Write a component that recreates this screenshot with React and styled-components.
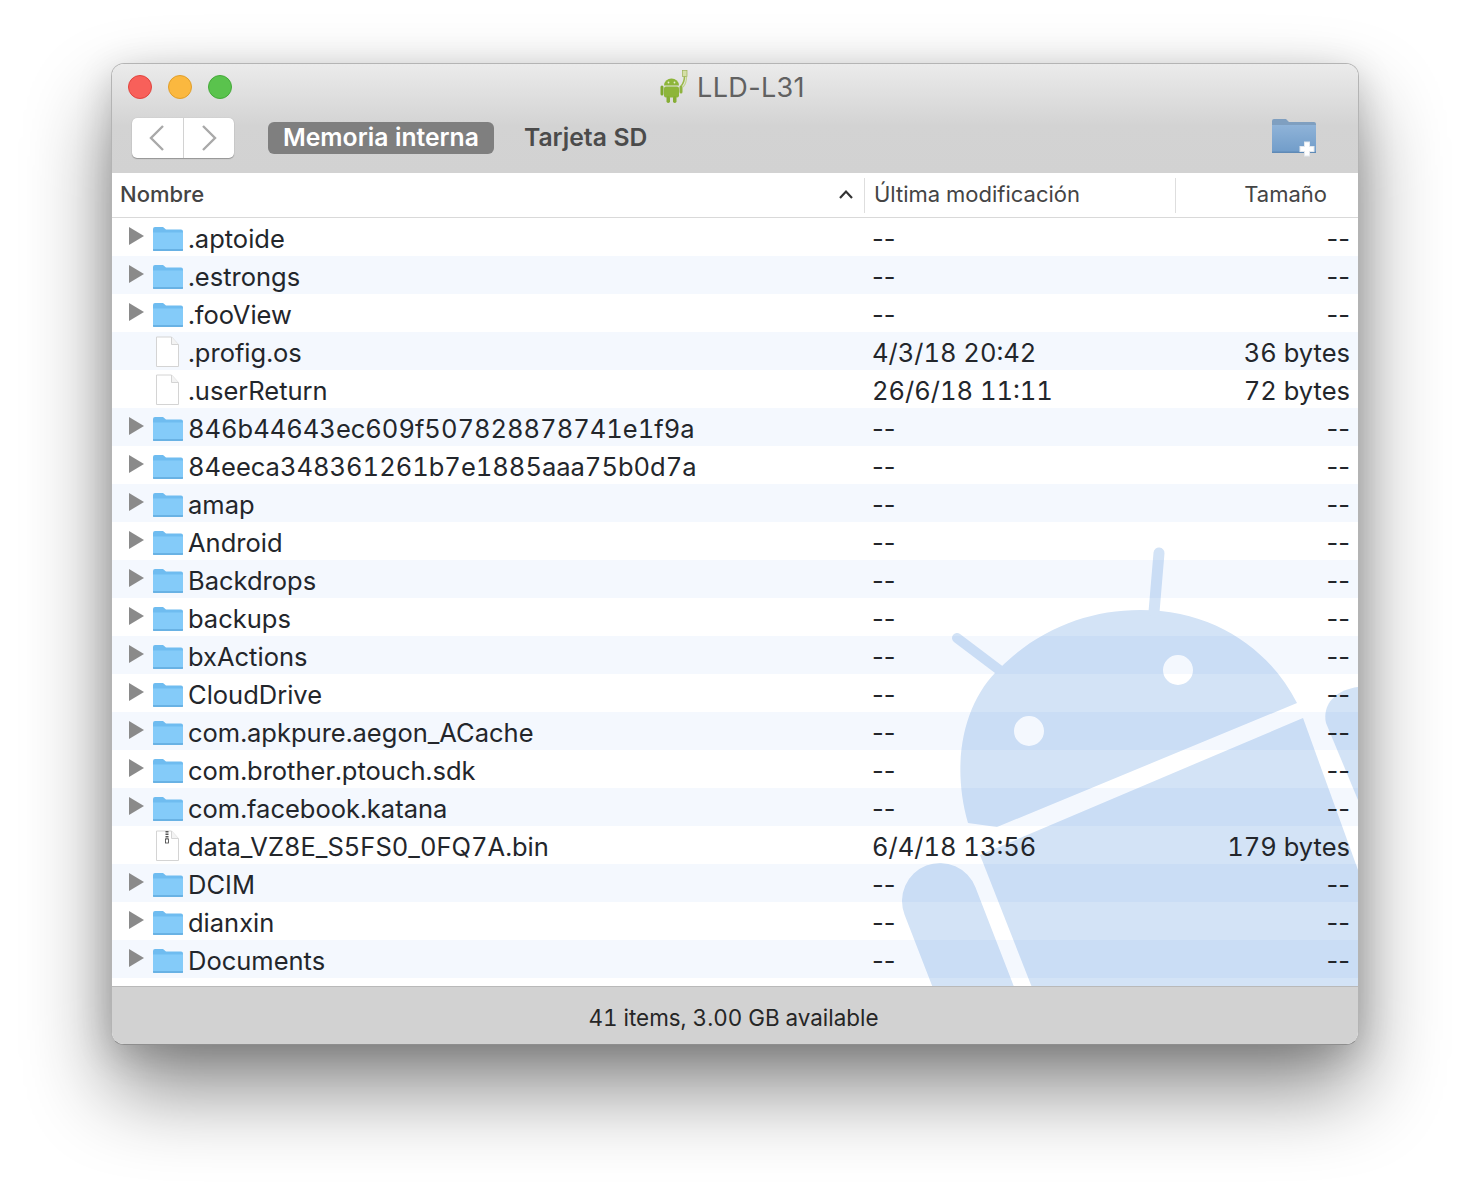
import React from 'react';
import styled, { createGlobalStyle } from 'styled-components';

const GlobalStyle = createGlobalStyle`
  html, body {
    margin: 0;
    background: #fff;
  }
  body {
    font-family: Inter, "Liberation Sans", sans-serif;
    font-variant-numeric: tabular-nums;
  }
`;

const Page = styled.div`
  width: 1470px;
  height: 1204px;
  box-sizing: border-box;
  padding-top: 63px;
  display: flex;
  justify-content: center;
  align-items: flex-start;
  overflow: hidden;
`;

const Window = styled.div`
  width: 1248px;
  height: 982px;
  box-sizing: border-box;
  border: 1px solid #b4b4b4;
  border-bottom-color: #8e8e8e;
  border-radius: 13px;
  background: #fff;
  box-shadow: 0 44px 84px rgba(0, 0, 0, 0.47), 0 8px 36px rgba(0, 0, 0, 0.16);
  display: flex;
  flex-direction: column;
  overflow: hidden;
`;

const TopBar = styled.div`
  height: 109px;
  flex: none;
  background: linear-gradient(#ebebeb 0, #d3d3d3 62px, #d2d2d2 100%);
  display: flex;
  flex-direction: column;
`;

const TitleRow = styled.div`
  height: 46px;
  padding: 0 16px;
  display: grid;
  grid-template-columns: 1fr auto 1fr;
  align-items: center;
`;

const Lights = styled.div`
  display: flex;
  gap: 16px;
`;

const Light = styled.span`
  width: 24px;
  height: 24px;
  box-sizing: border-box;
  border-radius: 50%;
  background: ${(p) => p.$color};
  border: 1px solid ${(p) => p.$edge};
`;

const Title = styled.div`
  display: flex;
  align-items: center;
  gap: 9px;
  margin-left: -6px;
  font-size: 27px;
  font-variant-numeric: normal;
  letter-spacing: 0.35px;
  color: #616161;
`;

const ToolRow = styled.div`
  display: flex;
  align-items: center;
  height: 39px;
  margin-top: 8px;
  padding: 0 40px 0 20px;
`;

const NavGroup = styled.div`
  width: 102px;
  height: 40px;
  box-sizing: border-box;
  display: flex;
  background: #fff;
  border-radius: 5px;
  box-shadow: 0 1px 1px rgba(0, 0, 0, 0.28), 0 0 1px rgba(0, 0, 0, 0.2);
`;

const NavButton = styled.div`
  flex: 1;
  display: flex;
  align-items: center;
  justify-content: center;
  & + & {
    border-left: 1px solid #d2d2d2;
  }
`;

const Tab = styled.div`
  height: 32px;
  box-sizing: border-box;
  display: flex;
  align-items: center;
  padding: 0 15px 1px;
  border-radius: 6px;
  font-size: 24.7px;
  font-weight: 600;
  white-space: nowrap;
  background: ${(p) => (p.$active ? '#7f7f7f' : 'transparent')};
  color: ${(p) => (p.$active ? '#fff' : '#4b4b4b')};
  margin-left: ${(p) => (p.$active ? '34px' : '15px')};
`;

const NewFolder = styled.div`
  margin-left: auto;
  display: flex;
`;

const Header = styled.div`
  height: 45px;
  flex: none;
  box-sizing: border-box;
  border-bottom: 1px solid #d9d9d9;
  display: grid;
  grid-template-columns: 753px 311px 1fr;
  color: #444;
  font-size: 22px;
`;

const HeaderCell = styled.div`
  margin: 5px 0 4px;
  display: flex;
  align-items: center;
  justify-content: ${(p) => p.$justify || 'flex-start'};
  padding: ${(p) => p.$padding};
  font-weight: ${(p) => p.$weight || 400};
  border-right: ${(p) => (p.$divider ? '1px solid #dedede' : 'none')};
`;

const ListArea = styled.div`
  position: relative;
  flex: 1;
  overflow: hidden;
  background: #fff;
`;

const Watermark = styled.svg`
  position: absolute;
  left: 0;
  top: 0;
  width: 1246px;
  height: 768px;
  fill: #d3e3f6;
  stroke: #d3e3f6;
`;

const Row = styled.div`
  position: relative;
  height: 38px;
  box-sizing: border-box;
  padding: 2px 8px 0 17px;
  display: grid;
  grid-template-columns: 743px 1fr auto;
  align-items: center;
  font-size: 25.5px;
  color: #23262b;
  background: ${(p) => (p.$striped ? 'rgba(30, 110, 230, 0.05)' : 'transparent')};
`;

const NameCell = styled.div`
  display: flex;
  align-items: center;
  white-space: nowrap;
`;

const Disclosure = styled.span`
  width: 15px;
  height: 18px;
  flex: none;
  margin-right: 8px;
  margin-top: -4px;
  background: ${(p) => (p.$hidden ? 'transparent' : '#8a8a8a')};
  clip-path: polygon(0 0, 100% 50%, 0 100%);
`;

const IconSlot = styled.span`
  width: 31px;
  height: 32px;
  flex: none;
  margin-right: 5px;
  display: flex;
  align-items: center;
  justify-content: center;
`;

const Value = styled.div`
  font-variant-numeric: ${(p) => (p.$empty ? 'normal' : 'tabular-nums')};
`;

const StatusBar = styled.div`
  height: 58px;
  flex: none;
  box-sizing: border-box;
  background: #d2d2d2;
  border-top: 1px solid #b9b9b9;
  display: flex;
  align-items: center;
  justify-content: center;
  font-size: 22.4px;
  color: #262626;
  padding: 4px 3px 0 0;
`;

const FolderIcon = () => (
  <svg width="31" height="28" viewBox="0 0 31 28">
    <path d="M1 5a2 2 0 0 1 2-2h8l3 2.5h15a2 2 0 0 1 2 2V25a2 2 0 0 1-2 2H3a2 2 0 0 1-2-2z" fill="#6fbcf0" />
    <path d="M1 8.5h30V25a2 2 0 0 1-2 2H3a2 2 0 0 1-2-2z" fill="#84cbf9" />
    <path d="M1 26h30" stroke="#5ea8dc" strokeWidth="1.4" />
  </svg>
);

const FileIcon = ({ zip }) => (
  <svg width="25" height="32" viewBox="0 0 25 32">
    <path d="M1.5 1h15l7 7.5v22h-22z" fill="#fff" stroke="#d4d4d4" />
    <path d="M16.5 1v7.5h7" fill="#f3f3f3" stroke="#d4d4d4" />
    {zip && <path d="M12 1v12" stroke="#555" strokeWidth="3" strokeDasharray="1.5 1" />}
    {zip && <rect x="10.5" y="9" width="3" height="4" fill="#fff" stroke="#444" strokeWidth="0.8" />}
  </svg>
);

const AndroidIcon = () => (
  <svg width="29" height="34" viewBox="0 0 29 34">
    <path d="M5 15.5a7.5 7 0 0 1 15 0z" fill="#8db53a" />
    <rect x="5" y="16.5" width="15" height="11" rx="2" fill="#8db53a" />
    <rect x="1.5" y="15.5" width="3" height="10" rx="1.5" fill="#7ea82f" />
    <rect x="20.5" y="15.5" width="3" height="8" rx="1.5" fill="#8fb33e" />
    <rect x="7.5" y="26" width="3.5" height="7" rx="1.7" fill="#86ad35" />
    <rect x="14" y="26" width="3.5" height="7" rx="1.7" fill="#86ad35" />
    <circle cx="9.5" cy="12.5" r="0.9" fill="#e6efcf" />
    <circle cx="15.5" cy="12.5" r="0.9" fill="#e6efcf" />
    <path d="M22 16c3-3 3.5-7 3.5-10" fill="none" stroke="#9dbb4c" strokeWidth="1.6" />
    <path d="M24 17c3-3 3.5-7 3.5-10" fill="none" stroke="#c3d58a" strokeWidth="1.2" />
    <rect x="23.5" y="0.5" width="4.5" height="6" fill="#d4dfa6" stroke="#9db356" strokeWidth="0.7" />
  </svg>
);

const NewFolderIcon = () => (
  <svg width="48" height="42" viewBox="0 0 48 42">
    <defs>
      <linearGradient id="nf" x1="0" y1="0" x2="0" y2="1">
        <stop offset="0" stopColor="#8fb3d8" />
        <stop offset="1" stopColor="#709cc9" />
      </linearGradient>
    </defs>
    <path d="M2 4a2 2 0 0 1 2-2h12l3 3h25a2 2 0 0 1 2 2v27a2 2 0 0 1-2 2H4a2 2 0 0 1-2-2z" fill="#7f9fc0" />
    <path d="M2 8h44v26a2 2 0 0 1-2 2H4a2 2 0 0 1-2-2z" fill="url(#nf)" />
    <path d="M2 35.3h44" stroke="#5f8ab6" strokeWidth="1.4" />
    <path d="M37 24.5v15M29.5 32h15" stroke="#e3e8ee" strokeWidth="6" />
    <path d="M37 25.5v13M30.5 32h13" stroke="#fff" strokeWidth="4" />
  </svg>
);

const NavArrow = ({ dir }) => (
  <svg width="18" height="28" viewBox="0 0 18 28" fill="none" stroke="#a9a9a9" strokeWidth="2.4">
    <path d={dir === 'left' ? 'M15 2 3 14l12 12' : 'M3 2l12 12L3 26'} />
  </svg>
);

const SortArrow = () => (
  <svg width="16" height="10" viewBox="0 0 16 10" fill="none" stroke="#333" strokeWidth="2.2">
    <path d="M2 9l6-6.5L14 9" />
  </svg>
);

const rows = [
  ['.aptoide'],
  ['.estrongs'],
  ['.fooView'],
  ['.profig.os', 'file', '4/3/18 20:42', '36 bytes'],
  ['.userReturn', 'file', '26/6/18 11:11', '72 bytes'],
  ['846b44643ec609f507828878741e1f9a'],
  ['84eeca348361261b7e1885aaa75b0d7a'],
  ['amap'],
  ['Android'],
  ['Backdrops'],
  ['backups'],
  ['bxActions'],
  ['CloudDrive'],
  ['com.apkpure.aegon_ACache'],
  ['com.brother.ptouch.sdk'],
  ['com.facebook.katana'],
  ['data_VZ8E_S5FS0_0FQ7A.bin', 'zip', '6/4/18 13:56', '179 bytes'],
  ['DCIM'],
  ['dianxin'],
  ['Documents'],
];

const App = () => {
  return (
    <Page>
      <GlobalStyle />
      <Window>
        <TopBar>
          <TitleRow>
            <Lights>
              <Light $color="#f8605a" $edge="#e0443e" />
              <Light $color="#fbb83f" $edge="#e09e2a" />
              <Light $color="#5ac34d" $edge="#45a93a" />
            </Lights>
            <Title>
              <AndroidIcon />
              LLD-L31
            </Title>
          </TitleRow>
          <ToolRow>
            <NavGroup>
              <NavButton><NavArrow dir="left" /></NavButton>
              <NavButton><NavArrow dir="right" /></NavButton>
            </NavGroup>
            <Tab $active>Memoria interna</Tab>
            <Tab>Tarjeta SD</Tab>
            <NewFolder><NewFolderIcon /></NewFolder>
          </ToolRow>
        </TopBar>

        <Header>
          <HeaderCell $justify="space-between" $padding="0 10px 3px 8px" $weight={500} $divider>
            <span>Nombre</span>
            <SortArrow />
          </HeaderCell>
          <HeaderCell $padding="0 0 3px 9px" $divider>Última modificación</HeaderCell>
          <HeaderCell $justify="flex-end" $padding="0 31px 3px 0">Tamaño</HeaderCell>
        </Header>

        <ListArea>
          <Watermark viewBox="112 218 1246 768" xmlns="http://www.w3.org/2000/svg">
            <path
              fillRule="evenodd"
              stroke="none"
              d="M1297 703 997 827 968 823C950 760 965 700 1000 668 1040 628 1090 610 1140 610 1215 610 1270 650 1297 703ZM1193 670a15 15 0 1 0-30 0 15 15 0 0 0 30 0ZM1044 731a15 15 0 1 0-30 0 15 15 0 0 0 30 0Z"
            />
            <path stroke="none" d="M1303 718 980 855 1033 990H1358V870Z" />
            <path stroke="none" d="M1358 687C1335 690 1322 705 1326 723L1358 800Z" />
            <path d="M940 901 990 1030" fill="none" strokeWidth="76" strokeLinecap="round" />
            <path d="M1159 553 1154 612" fill="none" strokeWidth="11" strokeLinecap="round" />
            <path d="M957 638 1002 672" fill="none" strokeWidth="10" strokeLinecap="round" />
          </Watermark>
          {rows.map(([name, kind, date, size], i) => (
            <Row key={name} $striped={i % 2 === 1}>
              <NameCell>
                <Disclosure $hidden={!!kind} />
                <IconSlot>
                  {kind ? <FileIcon zip={kind === 'zip'} /> : <FolderIcon />}
                </IconSlot>
                {name}
              </NameCell>
              <Value $empty={!date}>{date || '--'}</Value>
              <Value $empty={!size}>{size || '--'}</Value>
            </Row>
          ))}
        </ListArea>

        <StatusBar>41 items, 3.00 GB available</StatusBar>
      </Window>
    </Page>
  );
};

export default App;
